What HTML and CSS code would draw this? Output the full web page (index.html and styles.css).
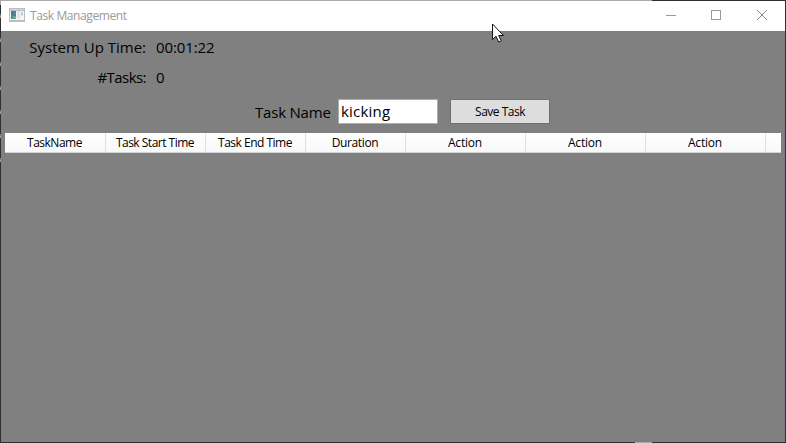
FILE: index.html
```html
<!DOCTYPE html>
<html lang="en">
<head>
<meta charset="utf-8">
<title>Task Management</title>
<link rel="stylesheet" href="styles.css">
</head>
<body>
<div class="window">
  <header class="titlebar">
    <svg class="app-icon" width="16" height="14" viewBox="0 0 16 14" shape-rendering="crispEdges">
      <path fill="#b9bdc5" d="M0 0h16v14H0z"/><path fill="#d2d5da" d="M1 1h14v1H1z"/><path fill="#f4f5f6" d="M1 3h14v9H1z"/>
      <path fill="#478c84" d="M2 3h5v8H2z"/><path fill="#4b7899" d="M2 3h2v4H2z"/><path fill="#65a990" d="M4 8h3v3H4z"/>
      <path fill="#e0e4e8" d="M8 3h3v8H8z"/><path fill="#b4cfd8" d="M12 4h2v3h-2z"/><path fill="#e8dfc4" d="M12 7h2v1h-2z"/>
    </svg>
    <span class="title">Task Management</span>
    <svg class="controls" width="138" height="30" viewBox="0 0 138 30" fill="none" stroke="#999" stroke-width="1">
      <path d="M19 14.500h10M64.500 9.500h9v9h-9z" shape-rendering="crispEdges"/><path d="M110 9l10 10M120 9l-10 10" stroke="#888"/>
    </svg>
  </header>
  <main class="content">
    <dl class="stats">
      <dt>System Up Time:</dt><dd class="clock">00:01:22</dd>
      <dt class="count">#Tasks:</dt><dd>0</dd>
    </dl>
    <form class="entry">
      <label for="task">Task Name</label>
      <div class="field" id="task">kicking</div>
      <button type="button">Save Task</button>
    </form>
    <section class="list">
      <div class="head">
        <span>TaskName</span><span>Task Start Time</span><span>Task End Time</span><span>Duration</span><span>Action</span><span>Action</span><span>Action</span>
      </div>
    </section>
  </main>
</div>
<svg class="pointer" width="14" height="21" viewBox="0 0 14 21"><path d="M.5 1v15.500l3.500-3.300 2.700 5.800 2.600-1.200-2.600-5.300h4.800z" fill="#fff" stroke="#111122"/></svg>
</body>
</html>
```
FILE: styles.css
```css
* { box-sizing: border-box; }
body { margin: 0; width: 786px; height: 443px; overflow: hidden; font-family: "Open Sans", "Noto Sans", sans-serif; color: #000; }
.window {
  width: 786px; height: 443px; display: flex; flex-direction: column; padding: 1px;
  background:
    linear-gradient(#aaa, #aaa) 0 0 / 652px 1px no-repeat,
    linear-gradient(#aaa, #aaa) 635px 442px / 17px 1px no-repeat,
    linear-gradient(#aaa, #aaa) 0 0 / 1px 5px no-repeat,
    linear-gradient(#303033, #303033) 0 168px / 1px 275px no-repeat,
    linear-gradient(transparent 14px, #688094 14px 16px, #a99a80 16px 18px, transparent 18px) 0 0 / 1px 24px repeat-y,
    #303033;
}
.titlebar { height: 30px; flex: none; display: flex; align-items: center; background: #fff; padding-left: 8px; }
.app-icon { margin-right: 5px; margin-top: -2px; }
.title { font-size: 12px; line-height: 16px; letter-spacing: -.4px; color: #999; }
.controls { margin-left: auto; }
.content { flex: 1; display: flex; flex-direction: column; background: #808080; }
.stats { margin: 0; padding-top: 2px; display: grid; grid-template-columns: 145px 1fr; grid-auto-rows: 30px; column-gap: 10px; font-size: 15px; line-height: 29px; }
.stats dt { text-align: right; }
.stats dd { margin: 0; }
.stats .clock { letter-spacing: -.1px; }
.stats .count { letter-spacing: -.55px; }
.entry { display: flex; margin: 0; height: 38px; padding: 6px 0 0 254px; }
.entry label { width: 83px; font-size: 15px; line-height: 26px; letter-spacing: -.2px; white-space: nowrap; }
.field { width: 100px; height: 25px; background: #fff; border: 1px solid #abadb3; padding-left: 2px; font-size: 15px; line-height: 23px; letter-spacing: .2px; }
.entry button { width: 100px; height: 25px; margin: 0 0 0 12px; padding: 0; background: #ddd; border: 1px solid #707070; font: 12px/22px "Open Sans", sans-serif; letter-spacing: -.5px; color: #000; }
.list { flex: 1; border: 1px solid #7b7f86; border-bottom: 0; padding: 1px 3px 0; }
.head { width: 776px; height: 20px; display: flex; background: linear-gradient(#fff, #f7f8fa); border-bottom: 1px solid #d5d5d5; font-size: 12px; line-height: 19px; letter-spacing: -.5px; text-align: center; }
.head span { width: 100px; padding-right: 1px; border-right: 1px solid #dedfe1; white-space: nowrap; }
.head span:first-child { width: 101px; }
.head span:nth-child(n+4) { letter-spacing: -.35px; }
.head span:nth-child(n+5) { width: 120px; letter-spacing: -.2px; }
.pointer { position: absolute; left: 492px; top: 23px; }
```
